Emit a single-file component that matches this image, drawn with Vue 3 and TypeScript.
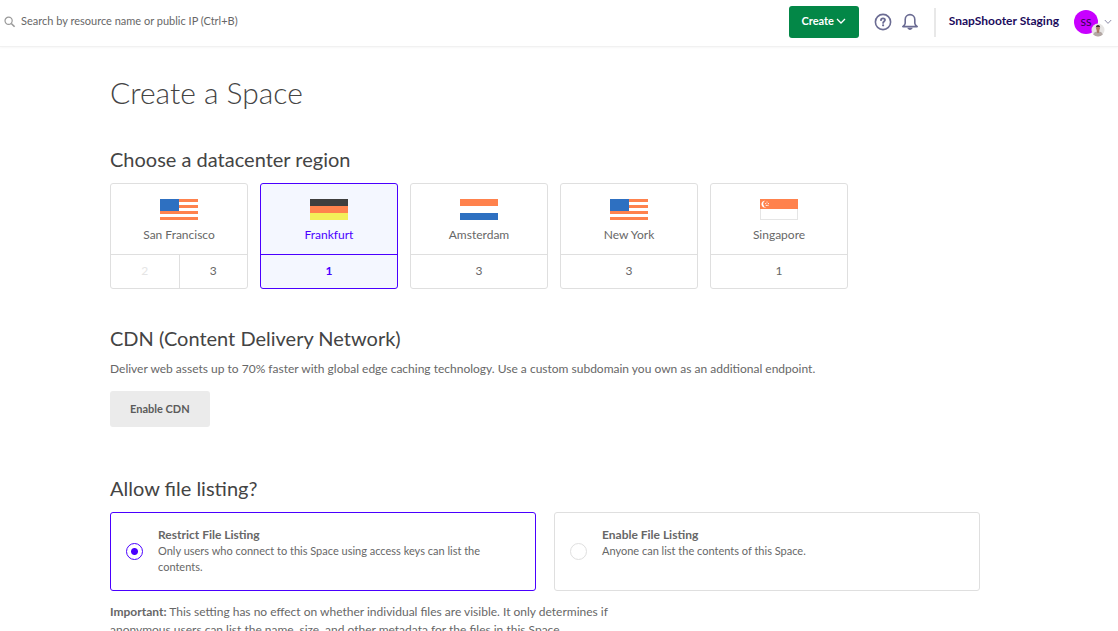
<script setup lang="ts">
import { ref } from 'vue'

type Flag = 'us' | 'de' | 'nl' | 'sg'

interface Slot {
  number: number
  disabled?: boolean
}

interface Region {
  id: string
  name: string
  flag: Flag
  slots: Slot[]
}

const regions: Region[] = [
  { id: 'sfo', name: 'San Francisco', flag: 'us', slots: [{ number: 2, disabled: true }, { number: 3 }] },
  { id: 'fra', name: 'Frankfurt', flag: 'de', slots: [{ number: 1 }] },
  { id: 'ams', name: 'Amsterdam', flag: 'nl', slots: [{ number: 3 }] },
  { id: 'nyc', name: 'New York', flag: 'us', slots: [{ number: 3 }] },
  { id: 'sgp', name: 'Singapore', flag: 'sg', slots: [{ number: 1 }] },
]

const listingOptions = [
  {
    value: 'restrict',
    title: 'Restrict File Listing',
    text: 'Only users who connect to this Space using access keys can list the contents.',
  },
  {
    value: 'enable',
    title: 'Enable File Listing',
    text: 'Anyone can list the contents of this Space.',
  },
]

const selected = ref('fra')
const listing = ref('restrict')
const query = ref('')
</script>

<template>
  <div class="page">
    <header class="topbar">
      <label class="search">
        <svg class="search-icon" viewBox="0 0 12 12" width="12" height="12" aria-hidden="true">
          <circle cx="4.6" cy="4.8" r="3.6" />
          <path class="handle" d="M7.3 7.5 10.6 10.8" />
        </svg>
        <input v-model="query" type="search" aria-label="Search" placeholder="Search by resource name or public IP (Ctrl+B)" />
      </label>

      <button class="create" type="button">
        Create
        <svg viewBox="0 0 10 6" width="10" height="6" aria-hidden="true"><path d="M1 1l4 4 4-4" /></svg>
      </button>

      <div class="tools">
        <button class="icon-button" type="button" aria-label="Help">
          <svg viewBox="0 0 18 18" width="18" height="18" aria-hidden="true">
            <circle cx="9" cy="9" r="7.6" />
            <path class="heavy" d="M7 7.2C7 6 7.8 5.4 9 5.4s2 .7 2 1.7c0 1.4-1.9 1.4-1.9 2.8" />
            <circle class="dot" cx="9.1" cy="12.3" r="1.1" />
          </svg>
        </button>
        <button class="icon-button" type="button" aria-label="Notifications">
          <svg viewBox="0 0 18 18" width="18" height="18" aria-hidden="true">
            <path d="M4.2 6.4a4.8 4.8 0 0 1 9.6 0v3.8c0 1.2.7 2 2.4 3.4H1.8c1.700-1.400 2.400-2.200 2.400-3.400z" />
            <path class="dot" d="M6.300 14.800h5.400c-.4 1.400-1.400 2.100-2.700 2.100s-2.300-.7-2.700-2.100z" />
          </svg>
        </button>
      </div>

      <button class="account" type="button">
        <span class="team">SnapShooter Staging</span>
        <span class="avatar">
          SS
          <svg class="photo" viewBox="0 0 14 14" width="14" height="14" aria-hidden="true">
            <circle cx="7" cy="7" r="6.5" fill="#e6e4e3" />
            <path d="M2.2 11.4C3 9.2 4.8 8.6 7 8.6s4 .6 4.8 2.8A6.5 6.5 0 0 1 2.2 11.4z" fill="#b3a8a4" />
            <path d="M5.8 7h2.4v2.2L7 10.2 5.8 9.2z" fill="#a87862" />
            <ellipse cx="7" cy="5.2" rx="1.9" ry="2.5" fill="#b08069" />
            <path d="M4.9 5C4.700 2.900 5.600 1.900 7 1.900S9.300 2.900 9.100 5L8.600 3.900H5.400z" fill="#3b302e" />
          </svg>
        </span>
        <svg class="caret" viewBox="0 0 8 6" width="8" height="6" aria-hidden="true"><path d="M.8 1 4 4.4 7.2 1" /></svg>
      </button>
    </header>

    <main class="content">
      <h1>Create a Space</h1>

      <section class="block">
        <h2>Choose a datacenter region</h2>
        <div class="regions">
          <article v-for="region in regions" :key="region.id" class="region" :class="{ active: selected === region.id }">
            <div class="region-head">
              <svg class="flag" viewBox="0 0 38 21" width="38" height="21" shape-rendering="crispEdges" aria-hidden="true">
                <template v-if="region.flag === 'us'">
                  <path fill="#fff" d="M0 0h38v21H0z" />
                  <path fill="#ff824d" d="M0 0h38v3H0zM0 6h38v3H0zM0 12h38v3H0zM0 18h38v3H0z" />
                  <path fill="#2e70c1" d="M0 0h19v12H0z" />
                </template>
                <template v-else-if="region.flag === 'de'">
                  <path fill="#3e3e3e" d="M0 0h38v7H0z" />
                  <path fill="#ff824d" d="M0 7h38v7H0z" />
                  <path fill="#f3ef59" d="M0 14h38v7H0z" />
                </template>
                <template v-else-if="region.flag === 'nl'">
                  <path fill="#ff824d" d="M0 0h38v7H0z" />
                  <path fill="#fff" d="M0 7h38v7H0z" />
                  <path fill="#2e70c1" d="M0 14h38v7H0z" />
                </template>
                <template v-else>
                  <path fill="#e5e5e5" d="M0 0h38v21H0z" />
                  <path fill="#fff" d="M1 10h36v10H1z" />
                  <path fill="#ff824d" d="M0 0h38v10H0z" />
                  <g fill="#fff" shape-rendering="auto">
                    <path d="M5.4 1.8A3.4 3.4 0 1 0 6.4 8.2 3.3 3.3 0 0 1 5.4 1.8z" />
                    <circle cx="7" cy="3" r=".6" />
                    <circle cx="5.7" cy="4.6" r=".6" />
                    <circle cx="8.4" cy="4.6" r=".6" />
                    <circle cx="6.3" cy="6.4" r=".6" />
                    <circle cx="7.9" cy="6.4" r=".6" />
                  </g>
                </template>
              </svg>
              <span>{{ region.name }}</span>
            </div>
            <div class="slots">
              <button
                v-for="slot in region.slots"
                :key="slot.number"
                type="button"
                :disabled="slot.disabled"
                :aria-label="`${region.name} ${slot.number}`"
                :aria-pressed="selected === region.id"
                @click="selected = region.id"
              >
                {{ slot.number }}
              </button>
            </div>
          </article>
        </div>
      </section>

      <section class="block">
        <h2>CDN (Content Delivery Network)</h2>
        <p class="lead">
          Deliver web assets up to 70% faster with global edge caching technology. Use a custom subdomain you own as an additional endpoint.
        </p>
        <button class="cdn" type="button">Enable CDN</button>
      </section>

      <section class="block listing">
        <h2>Allow file listing?</h2>
        <div class="options">
          <label v-for="option in listingOptions" :key="option.value" class="option" :class="{ active: listing === option.value }">
            <input v-model="listing" type="radio" name="listing" :value="option.value" />
            <span class="option-text">
              <strong>{{ option.title }}</strong>
              <span>{{ option.text }}</span>
            </span>
          </label>
        </div>
        <p class="note">
          <strong>Important:</strong> This setting has no effect on whether individual files are visible. It only determines if<br />
          anonymous users can list the name, size, and other metadata for the files in this Space.
        </p>
      </section>
    </main>
  </div>
</template>

<style>
html {
  scrollbar-width: none;
}

body {
  background: #fff;
}
</style>

<style scoped>
.page {
  font-family: Lato, "Liberation Sans", sans-serif;
  font-size: 12px;
  line-height: 16px;
  color: #676767;
}

button,
input {
  font: inherit;
  color: inherit;
}

button {
  padding: 0;
  border: 0;
  background: none;
  cursor: pointer;
}

svg {
  display: block;
  flex: none;
}

.topbar {
  display: flex;
  align-items: center;
  height: 44px;
  padding: 0 6px 2px 4px;
  border-bottom: 1px solid #f1f1f1;
  box-shadow: 0 1px 2px #f7f7f7;
}

.search {
  display: flex;
  flex: 1;
  align-items: center;
  gap: 5px;
}

.search-icon {
  fill: none;
  stroke: #999;
  stroke-width: 1.2;
}

.search-icon .handle {
  stroke-width: 1.6;
}

.search input {
  flex: 1;
  padding: 0 0 2px;
  border: 0;
  outline: 0;
  background: none;
  font-size: 11px;
}

.search input::placeholder {
  color: #676767;
  opacity: 1;
}

.create {
  display: flex;
  align-items: center;
  justify-content: center;
  gap: 2px;
  width: 70px;
  height: 32px;
  padding-bottom: 2px;
  border-radius: 3px;
  background: #038747;
  color: #fff;
  font-size: 11px;
  font-weight: 700;
}

.create svg {
  fill: none;
  stroke: #fff;
  stroke-width: 1.3;
}

.tools {
  display: flex;
  gap: 9px;
  margin-left: 15px;
  padding-right: 15px;
  border-right: 2px solid #e8e8e8;
  height: 29px;
  align-items: center;
}

.icon-button svg {
  fill: none;
  stroke: #6b6c93;
  stroke-width: 1.6;
  stroke-linejoin: round;
  stroke-linecap: round;
}

.icon-button .heavy {
  stroke-width: 1.8;
}

.icon-button .dot {
  fill: #6b6c93;
  stroke: none;
}

.account {
  display: flex;
  align-items: center;
  margin-left: 13px;
}

.team {
  padding-bottom: 3px;
  color: #1b0c5c;
  font-weight: 700;
}

.avatar {
  position: relative;
  width: 24px;
  height: 24px;
  margin: 0 6px 0 15px;
  border-radius: 50%;
  background: #c800ff;
  color: #2c0548;
  font-size: 10px;
  line-height: 24px;
}

.photo {
  position: absolute;
  right: -7px;
  bottom: -3px;
}

.caret {
  fill: none;
  stroke: #8d8ca8;
}

.content {
  padding: 27px 138px 40px 110px;
}

h1,
h2,
p {
  margin: 0;
}

h1 {
  color: #444;
  font-size: 30px;
  font-weight: 300;
  line-height: 36px;
}

h2 {
  color: #444;
  font-size: 20px;
  font-weight: 400;
  line-height: 24px;
}

.block {
  margin-top: 37px;
}

.regions {
  display: flex;
  flex-wrap: wrap;
  gap: 12px;
  margin-top: 12px;
}

.region {
  width: 136px;
  border: 1px solid #dfdfdf;
  border-radius: 3px;
}

.region-head {
  display: flex;
  flex-direction: column;
  align-items: center;
  gap: 7px;
  padding: 15px 0 11px;
}

.slots {
  display: flex;
  border-top: 1px solid #dfdfdf;
}

.slots button {
  flex: 1;
  height: 33px;
  padding-bottom: 2px;
}

.slots button:not(:last-child) {
  border-right: 1px solid #dfdfdf;
}

.slots button:disabled {
  color: #e5e5e5;
  cursor: default;
}

.region.active,
.region.active .slots {
  border-color: #4a00ff;
}

.region.active {
  background: #f4f7ff;
  color: #4a00ff;
}

.region.active button {
  font-weight: 700;
}

.lead {
  margin-top: 10px;
  line-height: 18px;
}

.cdn {
  height: 36px;
  margin-top: 13px;
  padding: 0 20px;
  border-radius: 3px;
  background: #ebebeb;
  color: #5b5b5b;
  font-size: 11px;
  font-weight: 700;
}

.listing {
  margin-top: 49px;
}

.options {
  display: grid;
  grid-template-columns: 1fr 1fr;
  gap: 18px;
  margin-top: 12px;
}

.option {
  display: flex;
  align-items: center;
  gap: 15px;
  padding: 14px 15px 15px;
  border: 1px solid #dfdfdf;
  border-radius: 3px;
  cursor: pointer;
}

.option.active {
  border-color: #4a00ff;
}

.option input {
  flex: none;
  width: 17px;
  height: 17px;
  margin: 0;
  appearance: none;
  border: 1px solid #dfdfdf;
  border-radius: 50%;
}

.option input:checked {
  border-color: #4a00ff;
  background: radial-gradient(circle, #4a00ff 3px, transparent 4px);
}

.option-text {
  align-self: flex-start;
  max-width: 350px;
}

.option-text strong,
.option-text span {
  display: block;
}

.option-text span {
  font-size: 11px;
}

.note {
  margin-top: 12px;
  line-height: 18px;
}
</style>
